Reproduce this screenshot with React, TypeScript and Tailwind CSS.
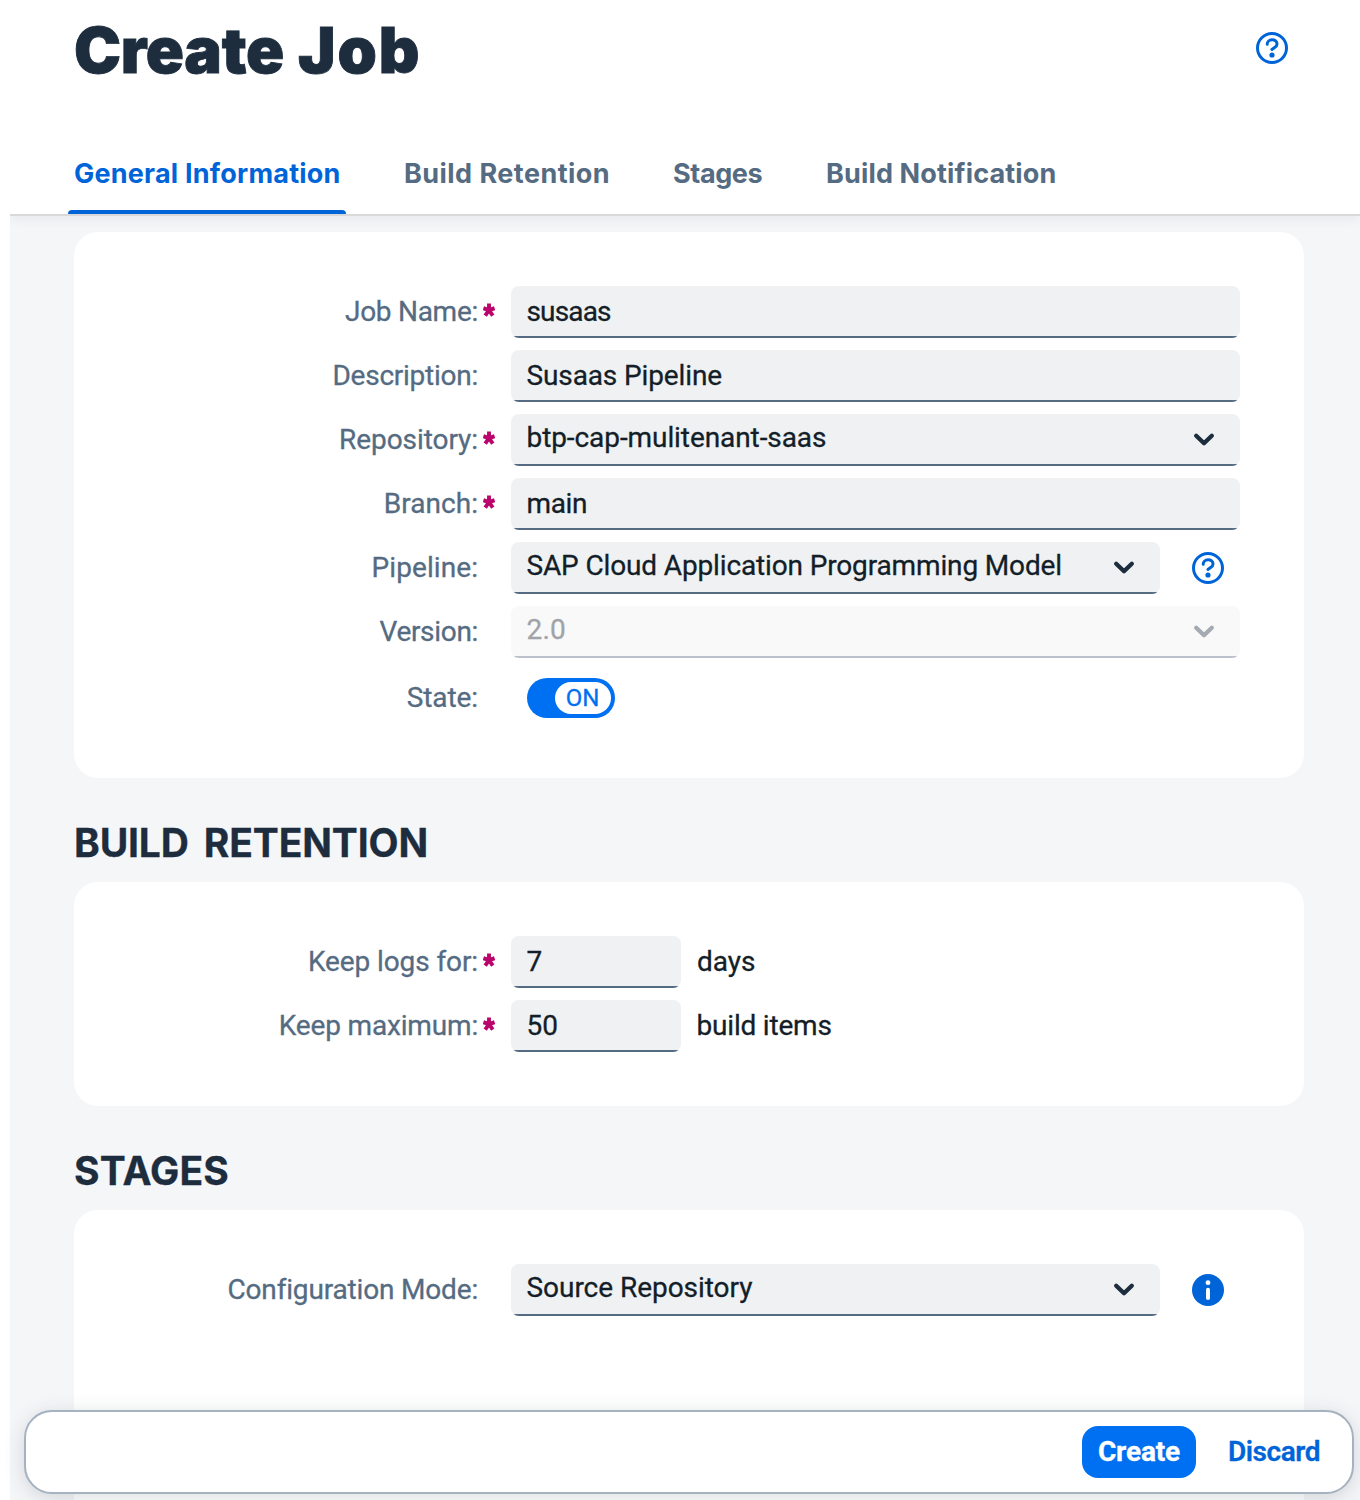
import type { ReactNode } from "react";

function HelpIcon() {
  return (
    <svg width="32" height="32" viewBox="0 0 32 32" fill="none" className="shrink-0">
      <circle cx="16" cy="16" r="14.5" stroke="#0064d9" strokeWidth="3" />
      <path
        d="M11.2 12.2C11.2 9.6 13.3 7.8 16.1 7.8C18.9 7.8 21 9.5 21 11.9C21 13.7 20 14.6 18.6 15.5L15.9 17.4"
        stroke="#0064d9"
        strokeWidth="3"
        strokeLinecap="round"
        strokeLinejoin="round"
      />
      <circle cx="16" cy="23" r="2.6" fill="#0064d9" />
    </svg>
  );
}

function InfoIcon() {
  return (
    <svg width="32" height="32" viewBox="0 0 32 32" className="shrink-0">
      <circle cx="16" cy="16" r="16" fill="#0064d9" />
      <circle cx="16" cy="8.7" r="2.4" fill="#fff" />
      <rect x="14" y="13.8" width="4" height="12.2" rx="2" fill="#fff" />
    </svg>
  );
}

function Chevron({ disabled = false }: { disabled?: boolean }) {
  return (
    <svg width="32" height="32" viewBox="0 0 32 32" fill="none" className="mr-5 shrink-0">
      <path
        d="M8.2 12.7L16 20.3L23.8 12.7"
        stroke={disabled ? "#a5abb2" : "#1d2d3e"}
        strokeWidth="4.3"
        strokeLinecap="round"
        strokeLinejoin="round"
      />
    </svg>
  );
}

function Row({
  label,
  tracking = "",
  required = false,
  children,
}: {
  label: string;
  tracking?: string;
  required?: boolean;
  children: ReactNode;
}) {
  return (
    <div className="flex h-[52px] items-center">
      <div className="flex w-[437px] shrink-0 items-center justify-end pr-4 text-[#556b82]">
        <span className={`whitespace-nowrap leading-[50px] ${tracking}`}>{label}</span>
        <span className="flex w-[17px] justify-end">
          {required && (
            <svg width="12" height="14" viewBox="0 0 12 14" className="mb-[4px]">
              <path
                d="M6 7.2V0.5M6 7.2L0.4 5.2M6 7.2L11.6 5.2M6 7.2L2.2 12.6M6 7.2L9.8 12.6"
                stroke="#ba066c"
                strokeWidth="3.9"
              />
            </svg>
          )}
        </span>
      </div>
      {children}
    </div>
  );
}

function Field({
  value,
  width,
  tracking = "",
  select = false,
  disabled = false,
}: {
  value: string;
  width: string;
  tracking?: string;
  select?: boolean;
  disabled?: boolean;
}) {
  return (
    <div
      className={`flex h-[52px] shrink-0 flex-col overflow-hidden rounded-lg ${width} ${
        disabled ? "bg-[#f9f9f9] text-[#a0a4a9]" : "bg-[#eff1f2] text-[#131e29]"
      }`}
    >
      <div className="flex h-[50px] items-center justify-between pl-[15.5px]">
        <span className={`whitespace-nowrap ${select ? "leading-[48px] mb-[2px]" : "leading-[50px] mt-[2px]"} ${tracking}`}>
          {value}
        </span>
        {select && <Chevron disabled={disabled} />}
      </div>
      <div className={`h-0.5 ${disabled ? "bg-[#bbc1cd]" : "bg-[#556b82]"}`} />
    </div>
  );
}

function Tab({ label, tracking, active = false }: { label: string; tracking: string; active?: boolean }) {
  return (
    <div className={`flex flex-col justify-between px-[6px] ${active ? "text-[#0064d9]" : "text-[#556b82]"}`}>
      <span className={`whitespace-nowrap leading-[36px] ${tracking}`}>{label}</span>
      <div className={`-mx-[6px] h-1 rounded-t ${active ? "bg-[#0064d9]" : ""}`} />
    </div>
  );
}

export default function App() {
  return (
    <div className="relative h-[1500px] w-[1360px] overflow-hidden bg-white pl-[10px] font-['Roboto',sans-serif] text-[28px] [-webkit-text-stroke:0.3px]">
      <header className="relative flex h-[216px] flex-col justify-between border-b-2 border-[#d9d9da] bg-white shadow-[0_2px_12px_rgba(34,53,72,0.08)] [clip-path:inset(0_0_-20px_0)]">
        <div className="flex items-start justify-between pl-[64px] pr-[72px]">
          <h1 className="mt-[10px] whitespace-nowrap font-['Inter',sans-serif] text-[63px] font-black leading-[80px] tracking-[-0.3px] text-[#1d2d3e] [-webkit-text-stroke:0.9px] [word-spacing:2px]">
            Create <span className="tracking-[1.9px]">Job</span>
          </h1>
          <div className="mt-8">
            <HelpIcon />
          </div>
        </div>
        <nav className="flex h-[58px] gap-[52px] pl-[58px] font-['Inter',sans-serif] text-[27px] font-bold [-webkit-text-stroke:0px]">
          <Tab label="General Information" tracking="w-[266px] tracking-[0.22px]" active />
          <Tab label="Build Retention" tracking="w-[205px] tracking-[0.45px]" />
          <Tab label="Stages" tracking="w-[89px] tracking-[-0.4px]" />
          <Tab label="Build Notification" tracking="tracking-[0.15px]" />
        </nav>
      </header>

      <main className="h-[1284px] bg-[#f5f6f8] pl-16 pr-14 pt-4">
        <section className="flex h-[546px] flex-col gap-3 rounded-3xl bg-white pt-[54px]">
          <Row label="Job Name:" tracking="tracking-[-0.27px]" required>
            <Field value="susaas" width="w-[729px]" tracking="tracking-[-0.85px]" />
          </Row>
          <Row label="Description:" tracking="tracking-[-0.25px]">
            <Field value="Susaas Pipeline" width="w-[729px]" tracking="tracking-[-0.12px]" />
          </Row>
          <Row label="Repository:" tracking="tracking-[-0.07px]" required>
            <Field value="btp-cap-mulitenant-saas" width="w-[729px]" tracking="tracking-[-0.08px]" select />
          </Row>
          <Row label="Branch:" tracking="tracking-[0.04px]" required>
            <Field value="main" width="w-[729px]" tracking="tracking-[-0.4px]" />
          </Row>
          <Row label="Pipeline:" tracking="tracking-[0.08px]">
            <Field
              value="SAP Cloud Application Programming Model"
              width="w-[649px]"
              tracking="tracking-[-0.14px]"
              select
            />
            <div className="ml-8">
              <HelpIcon />
            </div>
          </Row>
          <Row label="Version:" tracking="tracking-[-0.32px]">
            <Field value="2.0" width="w-[729px]" tracking="tracking-[0.2px]" select disabled />
          </Row>
          <div className="pt-[2px]">
            <Row label="State:" tracking="tracking-[-0.1px]">
              <div className="ml-4 flex h-10 w-[88px] justify-end rounded-full bg-[#0070f2] p-1">
                <div className="flex h-8 w-14 items-center justify-center rounded-full bg-white text-[24px] leading-8 text-[#0070f2]">
                  <span className="mr-px">ON</span>
                </div>
              </div>
            </Row>
          </div>
        </section>

        <h2 className="mt-10 h-16 whitespace-nowrap font-['Inter',sans-serif] text-[39px] font-bold leading-[49px] tracking-[-0.15px] text-[#1d2d3e] [word-spacing:6px]">
          BUILD RETENTION
        </h2>
        <section className="flex h-[224px] flex-col gap-3 rounded-3xl bg-white pt-[54px]">
          <Row label="Keep logs for:" tracking="tracking-[-0.1px]" required>
            <Field value="7" width="w-[170px]" />
            <span className="ml-4 leading-[50px] text-[#131e29]">days</span>
          </Row>
          <Row label="Keep maximum:" tracking="tracking-[-0.17px]" required>
            <Field value="50" width="w-[170px]" />
            <span className="ml-[15.5px] leading-[50px] tracking-[-0.19px] text-[#131e29]">build items</span>
          </Row>
        </section>

        <h2 className="mt-10 h-16 whitespace-nowrap font-['Inter',sans-serif] text-[39px] font-bold leading-[49px] tracking-[0.15px] text-[#1d2d3e]">
          STAGES
        </h2>
        <section className="h-[320px] rounded-t-3xl bg-white pt-[54px]">
          <Row label="Configuration Mode:" tracking="tracking-[-0.17px]">
            <Field value="Source Repository" width="w-[649px]" tracking="tracking-[-0.04px]" select />
            <div className="ml-8">
              <InfoIcon />
            </div>
          </Row>
        </section>
      </main>

      <footer className="absolute left-6 top-[1410px] flex h-[84px] w-[1330px] items-center justify-end rounded-[28px] border-2 border-[#a6b2bf] bg-white pr-4 shadow-[0_4px_20px_rgba(34,53,72,0.17)]">
        <button className="h-[52px] w-[114px] rounded-2xl bg-[#0070f2] font-bold leading-[50px] tracking-[-0.15px] text-white">
          Create
        </button>
        <button className="ml-4 h-[52px] w-[124px] font-semibold leading-[50px] tracking-[-0.45px] text-[#0064d9]">
          Discard
        </button>
      </footer>
    </div>
  );
}
